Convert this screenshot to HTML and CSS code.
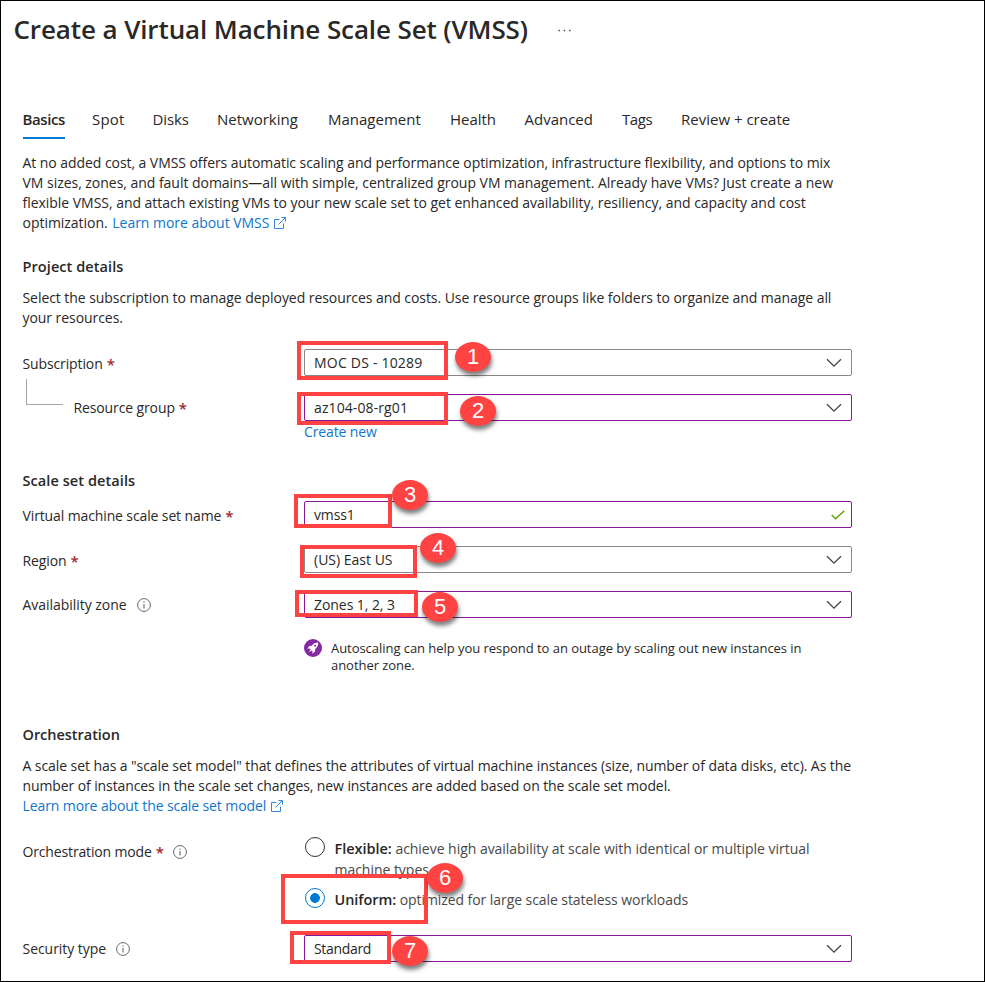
FILE: index.html
```html
<!DOCTYPE html>
<html lang="en">
<head>
<meta charset="utf-8">
<title>Create a Virtual Machine Scale Set (VMSS)</title>
<link rel="stylesheet" href="styles.css">
</head>
<body>
<svg class="defs" aria-hidden="true">
  <symbol id="chevron" viewBox="0 0 16 10"><path d="M1 1.2 8 8.2 15 1.2" fill="none" stroke="#444" stroke-width="1.3"/></symbol>
  <symbol id="info" viewBox="0 0 14 14"><circle cx="7" cy="7" r="6.4" fill="none" stroke="#666" stroke-width="1"/><path d="M7 6v4.4M7 3.6v1.2" stroke="#666" stroke-width="1.1"/></symbol>
  <symbol id="external" viewBox="0 0 12 12"><path d="M5.5 2.5h-5v9h9v-5M7.5.5h4v4M11.5.5 4.5 7.5" fill="none" stroke="#2f86dc" stroke-width="1"/></symbol>
</svg>
<main class="page">
  <header class="title-bar">
    <h1>Create a Virtual Machine Scale Set (VMSS)</h1>
    <svg class="more" viewBox="0 0 13 3"><path d="M.5 1.5h1.4M5.8 1.5h1.4M11.1 1.5h1.4" stroke="#444" stroke-width="1.4"/></svg>
  </header>

  <nav class="tabs">
    <a class="tab tab-basics active">Basics</a>
    <a class="tab tab-spot">Spot</a>
    <a class="tab tab-disks">Disks</a>
    <a class="tab tab-networking">Networking</a>
    <a class="tab tab-management">Management</a>
    <a class="tab tab-health">Health</a>
    <a class="tab tab-advanced">Advanced</a>
    <a class="tab tab-tags">Tags</a>
    <a class="tab">Review + create</a>
  </nav>

  <p class="intro">At no added cost, a VMSS offers automatic scaling and performance optimization, infrastructure flexibility, and options to mix<br><span class="loose">VM sizes, zones, and fault domains—all with simple, centralized group VM management. Already have VMs? Just create a new<br>flexible VMSS, and attach existing VMs to your new scale set to get enhanced availability, resiliency, and capacity and cost<br>optimization. <a class="link inline-link">Learn more about VMSS<svg class="external"><use href="#external"/></svg></a></span></p>

  <section class="section project">
    <h2>Project details</h2>
    <p>Select the subscription to manage deployed resources and costs. Use resource groups like folders to organize and manage all<br>your resources.</p>
    <div class="row">
      <label class="label low">Subscription <b class="req">*</b></label>
      <div class="field"><span class="wide">MOC DS - 10289</span><svg class="chevron"><use href="#chevron"/></svg></div>
    </div>
    <div class="row">
      <label class="label nested"><i class="connector"></i>Resource group <b class="req">*</b></label>
      <div class="field edited"><span class="group-value">az104-08-rg01</span><svg class="chevron"><use href="#chevron"/></svg></div>
    </div>
    <a class="link create">Create new</a>
  </section>

  <section class="section scale">
    <h2>Scale set details</h2>
    <div class="row">
      <label class="label low">Virtual machine scale set name <b class="req">*</b></label>
      <div class="field edited"><span class="name-value">vmss1</span><svg class="check" viewBox="0 0 14 10"><path d="M.7 5 4.6 8.8 13.3.8" fill="none" stroke="#57a300" stroke-width="1.3"/></svg></div>
    </div>
    <div class="row">
      <label class="label low">Region <b class="req">*</b></label>
      <div class="field"><span>(US) East US</span><svg class="chevron"><use href="#chevron"/></svg></div>
    </div>
    <div class="row">
      <label class="label zone">Availability zone <svg class="info"><use href="#info"/></svg></label>
      <div class="field edited"><span class="zone-value">Zones 1, 2, 3</span><svg class="chevron"><use href="#chevron"/></svg></div>
    </div>
    <div class="tip">
      <svg class="rocket" viewBox="0 0 18 18"><circle cx="9" cy="9" r="9" fill="#8528a3"/><path d="M14.3 3.600c-3-.1-4.900 1.200-6.400 3.100L5.500 7 3.200 9.700l2.500-.2.900.9-1.800 2.800 2.900-1.800.9.9-.3 2.500 2.700-2.300.2-2.400c2-1.500 3.200-3.500 3-6.500Z" fill="#fff"/><circle cx="11.200" cy="6.800" r="1" fill="#8528a3"/></svg>
      <p>Autoscaling can help you respond to an outage by scaling out new instances in<br>another zone.</p>
    </div>
  </section>

  <section class="section orchestration">
    <h2>Orchestration</h2>
    <p>A scale set has a "scale set model" that defines the attributes of virtual machine instances (size, number of data disks, etc). As the<br><span class="snug">number of instances in the scale set changes, new instances are added based on the scale set model.<br><a class="link">Learn more about the scale set model<svg class="external"><use href="#external"/></svg></a></span></p>
    <div class="mode-row">
      <label class="label low mode">Orchestration mode <b class="req">*</b> <svg class="info"><use href="#info"/></svg></label>
      <div class="options">
        <div class="option flexible"><i class="radio"></i><span><strong>Flexible:</strong> achieve high availability at scale with identical or multiple virtual<br>machine types</span></div>
        <div class="option uniform"><i class="radio checked"></i><span><strong>Uniform:</strong> optimized for large scale stateless workloads</span></div>
      </div>
    </div>
    <div class="row">
      <label class="label zone">Security type <svg class="info"><use href="#info"/></svg></label>
      <div class="field edited"><span class="tight">Standard</span><svg class="chevron"><use href="#chevron"/></svg></div>
    </div>
  </section>

  <div class="callouts">
    <i class="box box-1"></i><b class="badge badge-1">1</b>
    <i class="box box-2"></i><b class="badge badge-2">2</b>
    <i class="box box-3"></i><b class="badge badge-3">3</b>
    <i class="box box-4"></i><b class="badge badge-4">4</b>
    <i class="box box-5"></i><b class="badge badge-5">5</b>
    <i class="box box-6"></i><b class="badge badge-6">6</b>
    <i class="box box-7"></i><b class="badge badge-7">7</b>
  </div>
</main>
</body>
</html>
```
FILE: styles.css
```css
* { box-sizing: border-box; }

body {
  margin: 0;
  background: #fff;
  color: #292827;
  font: 14px/20px "Open Sans", "Noto Sans", sans-serif;
  letter-spacing: -0.06px;
}

h1, h2, p { margin: 0; }
.defs { position: absolute; width: 0; height: 0; }

.page {
  position: relative;
  width: 985px;
  height: 982px;
  padding: 10px 21.5px 0;
  border: 1px solid #000;
  overflow: hidden;
  white-space: nowrap;
}

/* Title and tabs */
.title-bar { display: flex; align-items: center; height: 36px; margin-left: -9px; }
h1 { width: 544px; font-size: 26px; font-weight: 600; line-height: 36px; letter-spacing: -0.11px; }
.more { width: 13px; height: 3px; margin-top: 2px; }

.tabs { display: flex; height: 30px; margin-top: 62px; font-size: 15px; letter-spacing: 0; }
.tab { flex: none; height: 30px; }
.tab.active { width: 42.5px; font-weight: 600; letter-spacing: -0.387px; border-bottom: 2px solid #0078d4; }
.tab-basics { margin-right: 27px; }
.tab-spot { width: 60.5px; letter-spacing: 0.15px; }
.tab-disks { width: 64.5px; letter-spacing: -0.1px; }
.tab-networking { width: 111px; }
.tab-management { width: 122px; }
.tab-health { width: 74.5px; letter-spacing: -0.05px; }
.tab-advanced { width: 97.5px; }
.tab-tags { width: 59px; letter-spacing: -0.4px; }

.intro { height: 80px; margin-top: 14px; }
.loose { letter-spacing: -0.03px; }
.snug { letter-spacing: -0.1px; }
.link { color: #0f75ca; }
.inline-link { margin-left: 1px; }
.external { width: 12px; height: 12px; margin-left: 5px; vertical-align: -0.5px; }

/* Form sections */
h2 { font-size: 14.5px; font-weight: 600; line-height: 20px; letter-spacing: 0.08px; }
.project { margin-top: 24px; }
.project p { margin: 11px 0 21px; }
.row { display: grid; grid-template-columns: 281.5px 548px; height: 27px; margin-bottom: 18px; }
.label { display: flex; align-items: center; height: 28px; letter-spacing: -0.12px; }
.label.low { height: 30px; }
.label.zone { letter-spacing: -0.04px; }
.label.mode { letter-spacing: -0.15px; }
.req { margin-left: 4px; color: #a4262c; font-weight: 600; font-size: 15px; }
.info { width: 14px; height: 14px; margin-left: 10px; }
.mode .info { margin-left: 9.5px; }
.nested { position: relative; padding-left: 51px; }
.connector {
  position: absolute;
  left: 3.5px;
  top: -15px;
  width: 37px;
  height: 26px;
  border-left: 1px solid #a6a6a6;
  border-bottom: 1px solid #a6a6a6;
}
.field {
  display: flex;
  align-items: center;
  justify-content: space-between;
  height: 27px;
  padding: 0 9px;
  border: 1px solid #8a8886;
  border-radius: 2px;
  letter-spacing: 0;
}
.field.edited { border-color: #881798; }
.wide { padding-top: 1px; letter-spacing: 0.21px; }
.group-value { letter-spacing: 0.1px; }
.name-value { letter-spacing: -0.15px; }
.zone-value { letter-spacing: -0.06px; }
.tight { letter-spacing: -0.33px; }
.chevron { width: 16px; height: 10px; }
.check { width: 14px; height: 10px; margin-right: -3px; }
.create { display: block; margin: -17px 0 0 281.5px; letter-spacing: -0.12px; }

.scale { margin-top: 29px; }
.scale h2 { margin-bottom: 10px; }
.tip { display: flex; gap: 9px; margin: 21px 0 0 281.5px; font-size: 13px; line-height: 17px; letter-spacing: -0.045px; }
.tip p { padding-top: 1px; }
.rocket { width: 18px; height: 18px; }

.orchestration { margin-top: 51px; }
.orchestration h2 { letter-spacing: -0.03px; }
.orchestration p { margin: 11px 0 21px; letter-spacing: -0.075px; }
.mode-row { display: grid; grid-template-columns: 281.5px 548px; height: 98px; }
.options { padding-left: 1px; color: #494847; }
.option { display: flex; gap: 9.5px; line-height: 21px; letter-spacing: -0.03px; }
.option strong { color: #292827; font-size: 14.5px; font-weight: 600; }
.option span { margin-top: 1px; }
.uniform { letter-spacing: -0.07px; }
.flexible { height: 51px; }
.radio { flex: none; width: 20px; height: 20px; border: 1px solid #323130; border-radius: 50%; }
.radio.checked { border-color: #0078d4; background: radial-gradient(circle, #0078d4 4.5px, transparent 5.2px); }

/* Numbered callouts laid over the form */
.callouts { position: absolute; left: -1px; top: -1px; width: 985px; height: 982px; }
.box { position: absolute; border: 4px solid #ff4343; }
.box-1 { left: 297px; top: 341px; width: 151px; height: 39px; }
.box-2 { left: 297px; top: 392px; width: 151px; height: 33px; }
.box-3 { left: 294px; top: 494px; width: 98px; height: 34px; }
.box-4 { left: 300px; top: 545px; width: 117px; height: 33px; }
.box-5 { left: 295px; top: 590px; width: 123px; height: 27px; }
.box-6 { left: 281px; top: 874px; width: 147px; height: 50px; }
.box-7 { left: 290px; top: 931px; width: 101px; height: 33px; }
.badge {
  position: absolute;
  width: 36px;
  height: 30px;
  border-radius: 50%;
  background: #ff4343;
  box-shadow: 1px 4px 4px rgba(0, 0, 0, 0.5);
  color: #fff;
  font: 22px/29px "Liberation Sans", Arial, sans-serif;
  text-align: center;
}
.badge-1 { left: 455px; top: 342px; }
.badge-2 { left: 460px; top: 396px; }
.badge-3 { left: 392px; top: 480px; }
.badge-4 { left: 420px; top: 533px; }
.badge-5 { left: 422px; top: 592px; }
.badge-6 { left: 427px; top: 863px; }
.badge-7 { left: 392px; top: 936px; }
```
